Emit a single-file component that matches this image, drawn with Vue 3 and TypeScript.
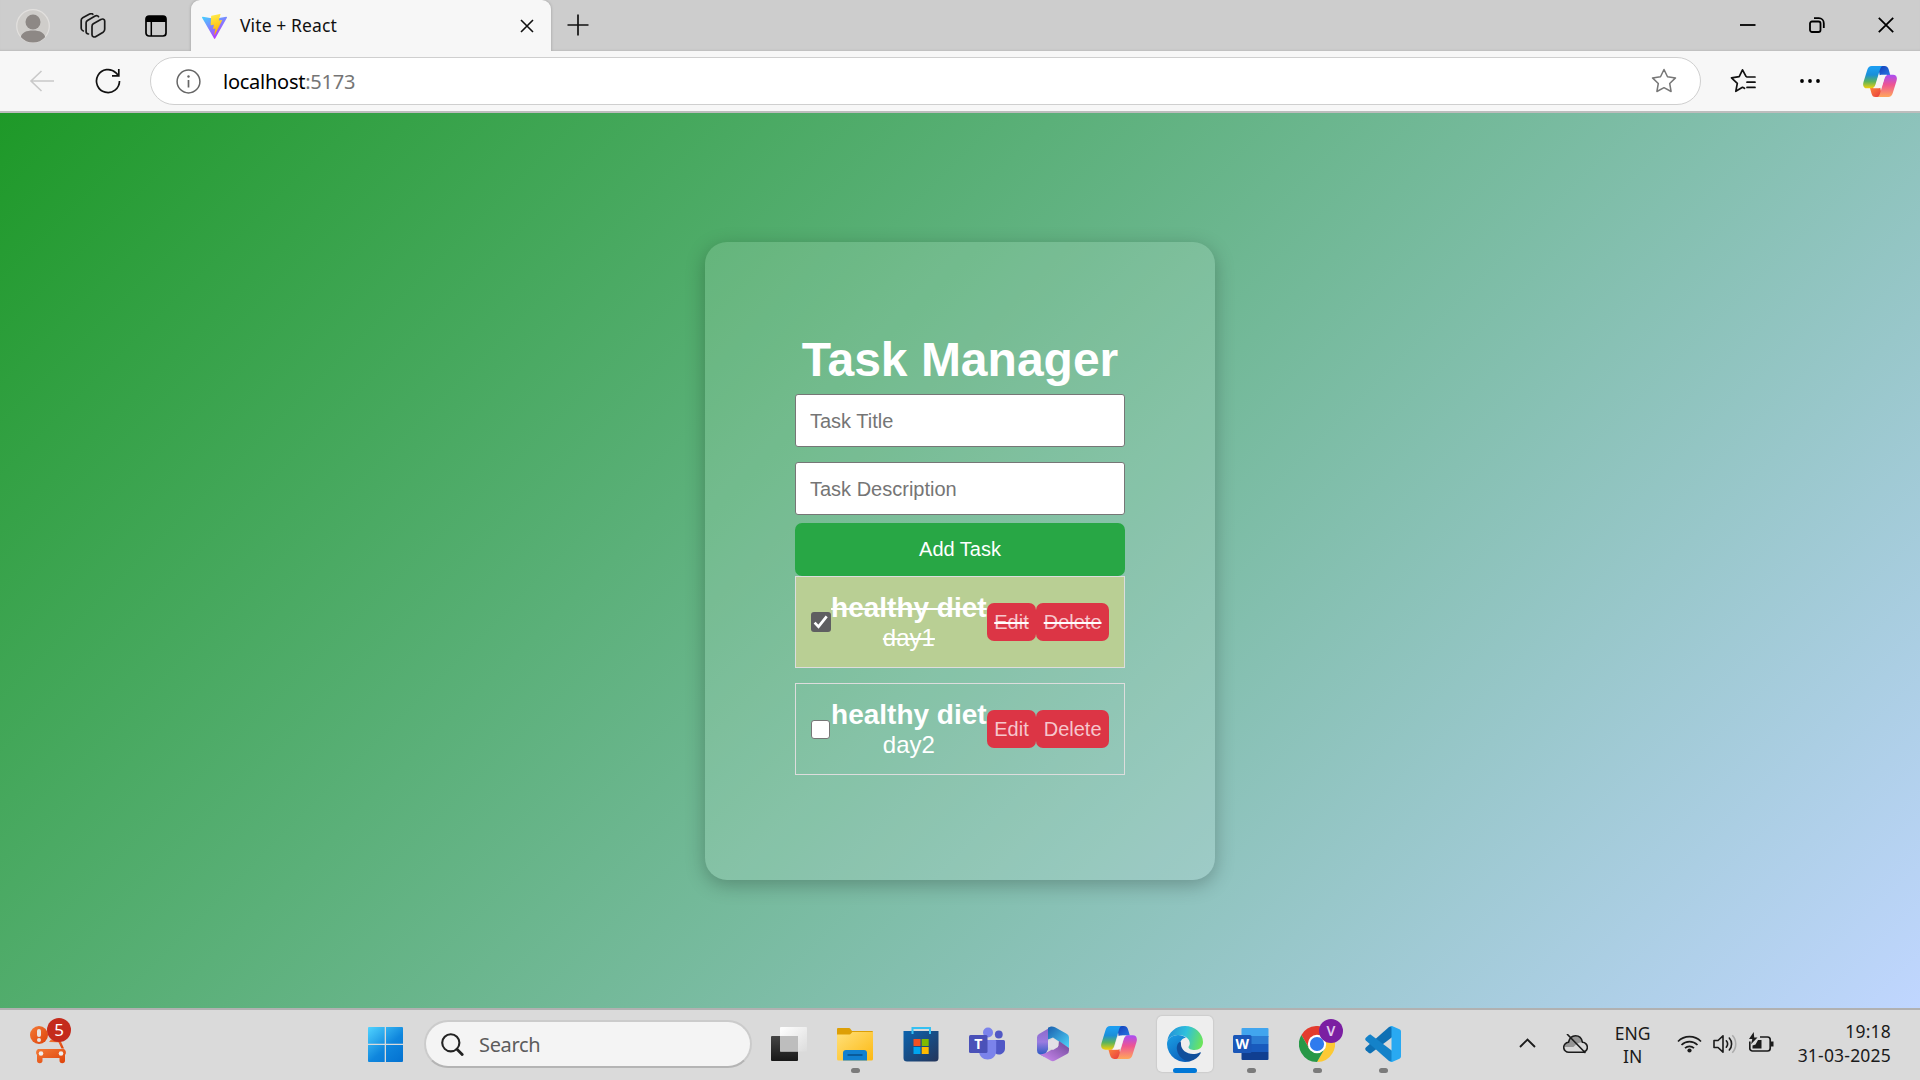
<script setup lang="ts">
import { ref } from 'vue'

interface Task {
  id: number
  title: string
  description: string
  done: boolean
}

const tasks = ref<Task[]>([
  { id: 1, title: 'healthy diet', description: 'day1', done: true },
  { id: 2, title: 'healthy diet', description: 'day2', done: false },
])
const title = ref('')
const description = ref('')

function addTask() {
  if (!title.value) return
  tasks.value.push({ id: Date.now(), title: title.value, description: description.value, done: false })
  title.value = ''
  description.value = ''
}
function removeTask(id: number) {
  tasks.value = tasks.value.filter((t) => t.id !== id)
}
</script>

<template>
  <div class="screen">
    <svg class="defs" width="0" height="0" aria-hidden="true">
      <defs>
        <linearGradient id="cpA" x1="0" y1="0" x2="0" y2="1"><stop offset="0.1" stop-color="#1c9df0" /><stop offset="0.4" stop-color="#1b8fd8" /><stop offset="0.7" stop-color="#5cb45c" /><stop offset="1" stop-color="#f5cf0a" /></linearGradient>
        <linearGradient id="cpB" x1="0" y1="0" x2="0" y2="1"><stop offset="0" stop-color="#a94df5" /><stop offset="0.45" stop-color="#ee5592" /><stop offset="1" stop-color="#ffa75b" /></linearGradient>
        <linearGradient id="cpC" x1="0" y1="0" x2="1" y2="1"><stop offset="0" stop-color="#123bb6" /><stop offset="1" stop-color="#2a7de8" /></linearGradient>
        <linearGradient id="cpD" x1="0" y1="0" x2="1" y2="1"><stop offset="0" stop-color="#ff8a3c" /><stop offset="1" stop-color="#e6383f" /></linearGradient>
        <symbol id="copilot" viewBox="0 0 34 31">
          <path d="M15 0h6.500c2.400 0 3.500 1.300 4.200 3.600L27.200 9h-4.700c-3 0-4.400.5-5.500 2z" fill="url(#cpC)" />
          <path d="M19 31h-6.500c-2.400 0-3.300-1.300-4-3.600L7 22h4.700c3 0 4.200-.5 5.300-2z" fill="url(#cpD)" />
          <path d="M8.700 0H20c-1.600 0-2.400 1.500-3.100 3.800l-4.400 14.700c-.7 2.300-1.900 3.800-4.300 3.800H4c-3.300 0-4.600-2.600-3.500-6.300L4.300 3.800C5 1.500 6.400 0 8.700 0z" fill="url(#cpA)" />
          <path d="M25.300 31H14c1.600 0 2.400-1.500 3.100-3.800l4.400-14.700c.7-2.300 1.900-3.800 4.300-3.800H30c3.300 0 4.600 2.600 3.500 6.300l-3.800 12.200C29 29.500 27.600 31 25.300 31z" fill="url(#cpB)" />
          <path d="M18.300 8.800h6c-1.600.5-2.400 1.700-3 3.500l-2.500 8c-.4 1.300-1.400 2-2.900 2H10c1.500-.5 2.300-1.800 2.900-3.500l2.400-8c.5-1.300 1.500-2 3-2z" fill="#f7f4f4" />
        </symbol>
      </defs>
    </svg>

    <header class="tabstrip">
      <div class="strip-left">
        <svg class="avatar" width="34" height="34" viewBox="0 0 34 34">
          <circle cx="17" cy="17" r="16.300" fill="#cfcdca" stroke="#e2e0de" stroke-width="1.200" />
          <circle cx="17" cy="13" r="7.500" fill="#8d8885" />
          <path d="M4.800 28c1.400-4.400 5.400-6.400 12.200-6.400S27.800 23.600 29.200 28A16 16 0 0 1 17 33.500 16 16 0 0 1 4.800 28z" fill="#8d8885" />
        </svg>
        <svg class="workspaces" width="26" height="26" viewBox="0 0 26 26" fill="none" stroke="#1a1a1a" stroke-width="1.700" stroke-linejoin="round" stroke-linecap="round">
          <path d="M13.300 10.800l7.500-4.300c2.200-1.100 3.900-.3 3.900 1.600v8.200c0 1.400-.5 2.200-1.600 2.900l-7.100 4.300c-1.900 1.100-4 .2-4-1.700v-8.300c0-1.200.3-2.100 1.300-2.700z" />
          <path d="M8.500 21c-1.800-.2-2.400-1-2.400-2.200V9.800c0-1.100.4-1.800 1.400-2.400l7.600-4.300c1.500-.8 2.900-.4 3.400.6" />
          <path d="M3.300 18C1.800 17.500 1.200 16.500 1.200 15.300V7.200c0-1.100.5-1.900 1.500-2.500l6.900-3.600c1.300-.7 2.600-.5 3.200.2" />
        </svg>
        <svg class="tabmenu" width="22" height="22" viewBox="0 0 22 22">
          <rect x="1" y="1" width="20" height="20" rx="3" fill="none" stroke="#000" stroke-width="1.700" />
          <path d="M1 7V4a3 3 0 0 1 3-3h14a3 3 0 0 1 3 3v3z" />
          <path d="M6.300 6v15" stroke="#000" stroke-width="1.500" />
        </svg>
      </div>
      <div class="tab">
        <svg class="vite" width="25" height="25" viewBox="0 0 256 257" preserveAspectRatio="none">
          <defs>
            <linearGradient id="vA" x1="0" y1="0" x2=".6" y2="1"><stop offset="0" stop-color="#41d1ff" /><stop offset="1" stop-color="#bd34fe" /></linearGradient>
            <linearGradient id="vB" x1=".4" y1="0" x2=".6" y2="1"><stop offset="0" stop-color="#ffea4a" /><stop offset=".25" stop-color="#ffdd35" /><stop offset="1" stop-color="#ffa800" /></linearGradient>
          </defs>
          <path fill="url(#vA)" d="M255.200 37.900L134.900 252.900c-2.500 4.500-8.900 4.500-11.400.1L.9 38c-2.700-4.800 1.300-10.500 6.700-9.600l120.400 21.500c.8.100 1.500.1 2.300 0l118-21.500c5.400-1 9.500 4.700 6.900 9.500z" />
          <path fill="url(#vB)" d="M185.400.1L96.400 17.500a3.300 3.300 0 0 0-2.600 3l-5.500 92.500a3.300 3.300 0 0 0 4 3.400l24.800-5.700c2.300-.5 4.400 1.500 3.900 3.900l-7.400 36c-.4 2.400 1.800 4.500 4.200 3.800l15.300-4.700c2.300-.7 4.600 1.400 4.100 3.800l-11.700 56.600c-.7 3.600 4 5.500 6 2.400l1.300-2 72.600-144.800c1.200-2.400-.9-5.200-3.500-4.700l-25.500 5c-2.400.4-4.500-1.800-3.800-4.200l16.600-57.700c.7-2.300-1.400-4.600-3.800-4z" />
        </svg>
        <span class="tab-title">Vite + React</span>
        <svg class="tab-close" width="14" height="14" viewBox="0 0 14 14"><path d="M1 1l12 12M13 1L1 13" stroke="#111" stroke-width="1.600" /></svg>
      </div>
      <svg class="newtab" width="22" height="22" viewBox="0 0 22 22"><path d="M11 .5v21M.5 11h21" stroke="#111" stroke-width="1.700" /></svg>
      <div class="winctl">
        <svg width="16" height="16" viewBox="0 0 16 16"><path d="M0 8h15.500" stroke="#000" stroke-width="1.800" /></svg>
        <svg width="16" height="16" viewBox="0 0 16 16" fill="none" stroke="#000" stroke-width="1.800"><rect x="1" y="4.500" width="10.500" height="10.500" rx="2" /><path d="M5 1.200h4.800a5 5 0 0 1 5 5V11" /></svg>
        <svg width="16" height="16" viewBox="0 0 16 16"><path d="M.8.8l14.400 14.400M15.200.8L.8 15.200" stroke="#000" stroke-width="1.800" /></svg>
      </div>
    </header>

    <div class="toolbar">
      <svg class="back" width="26" height="22" viewBox="0 0 26 22" fill="none" stroke="#c9c9c9" stroke-width="1.600"><path d="M12.500 1L2 11l10.500 10M2 11h23" /></svg>
      <svg class="reload" width="26" height="26" viewBox="0 0 26 26" fill="none" stroke="#111" stroke-width="1.700"><path d="M24.500 13A11.500 11.500 0 1 1 21 4.800l2.500 2.700M23.800 1v6.800H17" /></svg>
      <div class="address">
        <svg width="25" height="25" viewBox="0 0 25 25" fill="none" stroke="#666" stroke-width="1.500"><circle cx="12.500" cy="12.500" r="11.400" /><path d="M12.500 11v7.500" stroke-width="1.700" /><circle cx="12.500" cy="7.500" r="1.200" fill="#666" stroke="none" /></svg>
        <span class="url">localhost<i>:5173</i></span>
        <svg width="26" height="26" viewBox="0 0 26 26" fill="none" stroke="#777" stroke-width="1.500" stroke-linejoin="round"><path d="M13 1.500l3.500 7.300 8 1.100-5.800 5.600 1.400 8-7.100-3.800-7.100 3.800 1.400-8L1.500 9.900l8-1.100z" /></svg>
      </div>
      <svg class="favs" width="26" height="26" viewBox="0 0 26 26" fill="none" stroke="#111" stroke-width="1.700" stroke-linejoin="round" stroke-linecap="round"><path d="M14.500 20.300l-2-1-6.700 4 1.500-8L1.500 9.800l7.700-1.200L12.500 1.800l3.500 6.500M17 9h8M17 14.200h8M17 19.400h8" /></svg>
      <svg class="more" width="20" height="6" viewBox="0 0 20 6"><circle cx="2" cy="3" r="1.900" /><circle cx="10" cy="3" r="1.900" /><circle cx="18" cy="3" r="1.900" /></svg>
      <svg class="cp" width="34" height="31"><use href="#copilot" /></svg>
    </div>

    <main class="page">
      <section class="card">
        <h1>Task Manager</h1>
        <input v-model="title" class="field" placeholder="Task Title" />
        <input v-model="description" class="field" placeholder="Task Description" />
        <button class="add" @click="addTask">Add Task</button>
        <ul class="list">
          <li v-for="t in tasks" :key="t.id" class="item" :class="{ done: t.done }">
            <span class="check" @click="t.done = !t.done">
              <svg v-if="t.done" width="20" height="20" viewBox="0 0 20 20"><path d="M3.600 10.600l3.900 4L15.700 4.300" fill="none" stroke="#fff" stroke-width="2.700" /></svg>
            </span>
            <div class="info">
              <h3>{{ t.title }}</h3>
              <p>{{ t.description }}</p>
            </div>
            <div class="actions">
              <button>Edit</button>
              <button @click="removeTask(t.id)">Delete</button>
            </div>
          </li>
        </ul>
      </section>
    </main>

    <footer class="taskbar">
      <div class="widget">
        <svg width="42" height="46" viewBox="0 0 42 46">
          <defs><linearGradient id="car" x1="0" y1="0" x2="1" y2="1"><stop offset="0" stop-color="#f37a36" /><stop offset="1" stop-color="#de420a" /></linearGradient></defs>
          <circle cx="9" cy="17" r="9" fill="url(#car)" />
          <rect x="7" y="11" width="4" height="8" rx="2" fill="#e8e4e2" /><circle cx="9" cy="22" r="2" fill="#e8e4e2" />
          <path d="M19 24l2-2.500h9l4 9-2.500 0-3-6.300z" fill="url(#car)" />
          <path d="M8 31h26a4 4 0 0 1 1 6v5.500a2.500 2.500 0 0 1-5.500 0V40h-17v2.500a2.500 2.500 0 0 1-5.500 0V37a4 4 0 0 1 1-6z" fill="url(#car)" />
          <circle cx="11" cy="35.500" r="2.300" fill="#eee" /><circle cx="31" cy="35.500" r="2.300" fill="#eee" />
        </svg>
        <span class="badge">5</span>
      </div>

      <div class="center">
        <svg class="start" width="35" height="35" viewBox="0 0 35 35">
          <defs><linearGradient id="win" gradientUnits="userSpaceOnUse" x1="0" y1="0" x2="30" y2="35"><stop offset="0" stop-color="#50d3ff" /><stop offset=".6" stop-color="#0f86dd" /><stop offset="1" stop-color="#0574d2" /></linearGradient></defs>
          <path fill="url(#win)" d="M1 0h15.700v16.700H0V1a1 1 0 0 1 1-1zM18 0h16a1 1 0 0 1 1 1v15.700H18zM0 18h16.700v17H1a1 1 0 0 1-1-1zM18 18h17v16a1 1 0 0 1-1 1H18z" />
        </svg>
        <div class="search">
          <svg width="23" height="23" viewBox="0 0 23 23" fill="none" stroke="#222" stroke-linecap="round"><circle cx="9.800" cy="9.800" r="8.600" stroke-width="2.100" /><path d="M16 16.200l5.200 5.300" stroke-width="2.800" /></svg>
          <span>Search</span>
        </div>
        <div class="apps">
          <div class="app">
            <svg width="36" height="36" viewBox="0 0 36 36"><defs><linearGradient id="tv" x1="0" y1="0" x2="0" y2="1"><stop offset="0" stop-color="#444" /><stop offset="1" stop-color="#181818" /></linearGradient><linearGradient id="tl" x1="0" y1="0" x2="1" y2="1"><stop offset="0" stop-color="#fff" /><stop offset="1" stop-color="#dcdcdc" /></linearGradient></defs><rect x="0" y="10" width="27" height="25" rx="1" fill="url(#tv)" /><rect x="9" y="1" width="27" height="24.500" rx="1" fill="url(#tl)" /><path d="M9 10h18v15.500H9z" fill="#bdbdbd" /></svg>
          </div>
          <div class="app open">
            <svg width="36" height="36" viewBox="0 0 36 36"><defs><linearGradient id="fo" x1="0" y1="0" x2="1" y2="1"><stop offset="0" stop-color="#ffe07a" /><stop offset="1" stop-color="#fdb912" /></linearGradient></defs><path d="M0 3a1 1 0 0 1 1-1h10.500c1 0 1.500.3 2 1l1.500 2H35a1 1 0 0 1 1 1v8H0z" fill="#dd9f06" /><path d="M0 8.500h12c1 0 1.500-.3 2-1l1.300-1.500H36V33a1.500 1.500 0 0 1-1.500 1.500h-33A1.500 1.500 0 0 1 0 33z" fill="url(#fo)" /><path d="M6 34.500V27a3 3 0 0 1 3-3h18a3 3 0 0 1 3 3v7.500z" fill="#1180d0" /><path d="M10.500 29h15" stroke="#0a5796" stroke-width="1.800" /></svg>
          </div>
          <div class="app">
            <svg width="36" height="36" viewBox="0 0 36 36"><defs><linearGradient id="st" x1="0" y1="0" x2="1" y2="1"><stop offset="0" stop-color="#0b63ae" /><stop offset="1" stop-color="#25355a" /></linearGradient></defs><path d="M.5 5h35v27a3.500 3.500 0 0 1-3.500 3.500H4A3.500 3.500 0 0 1 .5 32z" fill="url(#st)" /><path d="M9.500 8V2h17.500v6" fill="none" stroke="#35c0f2" stroke-width="2" /><path d="M10.500 13h7v7h-7z" fill="#f25022" /><path d="M18.700 13h7v7h-7z" fill="#7fba00" /><path d="M10.500 21h7v7h-7z" fill="#00a4ef" /><path d="M18.700 21h7v7h-7z" fill="#ffb900" /></svg>
          </div>
          <div class="app">
            <svg width="36" height="36" viewBox="0 0 36 36"><circle cx="29.800" cy="8.500" r="3.900" fill="#5158c4" /><path d="M25 14h9.500a1.500 1.500 0 0 1 1.500 1.500v7a6 6 0 0 1-10 4.500z" fill="#5058c6" /><circle cx="19" cy="6.500" r="5" fill="#7b83eb" /><path d="M11 14h15a1.200 1.200 0 0 1 1.200 1.200V25c0 5-4 8.500-8.600 8.500S10 30 10 25z" fill="#7b83eb" /><rect x="0" y="9" width="18.500" height="18" rx="1.500" fill="#4a51b8" /><text x="9.200" y="23" text-anchor="middle" class="glyph" font-size="14">T</text></svg>
          </div>
          <div class="app">
            <svg width="36" height="36" viewBox="0 0 36 36"><defs><linearGradient id="m1" x1="0" y1="0" x2="0" y2="1"><stop offset="0" stop-color="#8a67c8" /><stop offset=".5" stop-color="#9a7be0" /><stop offset="1" stop-color="#1d56c0" /></linearGradient><linearGradient id="m2" x1="0" y1="0" x2="1" y2="1"><stop offset="0" stop-color="#1a5fae" /><stop offset="1" stop-color="#4ed5fb" /></linearGradient><linearGradient id="m3" x1="0" y1="1" x2="1" y2="0"><stop offset="0" stop-color="#d28ef5" /><stop offset="1" stop-color="#6b4595" /></linearGradient></defs><path d="M15.500 1.300L4 8a4 4 0 0 0-2 3.500v13A4 4 0 0 0 4 28l5 2.500 4-7V13z" fill="url(#m1)" /><path d="M13 1.800c2-1.500 4.500-2 7-.5L32 8a4 4 0 0 1 2 3.500V22l-10-6.500-6-4-5 2z" fill="url(#m2)" /><path d="M34 22v2.500a4 4 0 0 1-2 3.500l-12 6.500c-1.500.9-3 .9-4.500 0L4 28c3 1 6-.5 8.500-2l11-6 .5-5z" fill="url(#m3)" /><path d="M13 15.500l5-3 5 3v5.500l-5 3-5-3z" fill="#e2e0e6" /></svg>
          </div>
          <div class="app"><svg width="36" height="33"><use href="#copilot" /></svg></div>
          <div class="app open active">
            <svg width="36" height="36" viewBox="0 0 36 36"><defs><linearGradient id="e1" x1="0" y1=".3" x2="1" y2=".5"><stop offset="0" stop-color="#2390d8" /><stop offset=".5" stop-color="#2fc0dc" /><stop offset="1" stop-color="#6be45c" /></linearGradient><linearGradient id="e2" x1="0" y1="0" x2=".6" y2="1"><stop offset="0" stop-color="#1ba0e4" /><stop offset="1" stop-color="#0c62bd" /></linearGradient></defs><path d="M.3 15C1.500 6 9 0 18 0c10 0 18 7.500 18 16 0 5-3.500 8-8.500 8-3.500 0-6-1.300-6-2.700 0-1 1.300-1.500 1.300-4 0-4.500-5-8.300-11-8.300C6 9 2 11.500.3 15z" fill="url(#e1)" /><path d="M0 18c0-5.500 5-9 11-9 3 0 5.700 1 8 2.700-4 .3-6.500 4-6.500 8.300 0 7 5 13 12 14.700A18 18 0 0 1 0 18z" fill="url(#e2)" /><path d="M13.500 15.500C10 17 9.500 21 10 24c1 6 6.500 11.500 13 11.300 5-1.300 8.500-4 10.700-8 .4-.8-.3-1.200-1-.8-2.200 1.200-4.500 1.500-6.700 1.500-6.500 0-12-4.500-12-9.500 0-1.500 0-2-.5-3z" fill="#104f9c" /></svg>
          </div>
          <div class="app open">
            <svg width="36" height="36" viewBox="0 0 36 36"><path d="M9.500 2h25a1 1 0 0 1 1 1v8h-27V3a1 1 0 0 1 1-1z" fill="#41a5ee" /><path d="M8.500 10h27v8h-27z" fill="#2b7cd3" /><path d="M8.500 18h27v8h-27z" fill="#185abd" /><path d="M8.500 26h27v7a1 1 0 0 1-1 1h-25a1 1 0 0 1-1-1z" fill="#103f91" /><rect x="0" y="9" width="18.500" height="18" rx="1.500" fill="#1a57b8" /><text x="9.200" y="23" text-anchor="middle" class="glyph" font-size="14">W</text></svg>
          </div>
          <div class="app open">
            <svg width="36" height="36" viewBox="0 0 36 36"><path d="M2.400 9A18 18 0 0 1 33.600 9H18L10.200 22.500z" fill="#e33b2e" /><path d="M33.600 9A18 18 0 0 1 18 36l7.800-13.500L18 9z" fill="#fcc934" /><path d="M18 36A18 18 0 0 1 2.400 9l7.800 13.500h15.600z" fill="#279847" /><circle cx="18" cy="18" r="9.200" fill="#fff" /><circle cx="18" cy="18" r="7.100" fill="#2f7bee" /></svg>
            <span class="profile">V</span>
          </div>
          <div class="app open">
            <svg width="36" height="36" viewBox="0 0 36 36"><path d="M27 .3v11L6.200 27c-.8.600-1.600.5-2.300-.1L.8 24.200c-.8-.8-.8-1.900 0-2.700L24 1z" fill="#0e70b4" /><path d="M27 35.700v-11L6.200 9c-.8-.6-1.600-.5-2.300.1L.8 11.800c-.8.800-.8 1.900 0 2.700L24 35z" fill="#1482c9" /><path d="M27 0l7.500 3.300A2.500 2.500 0 0 1 36 5.500v25a2.500 2.500 0 0 1-1.500 2.200L27 36c-.8.300-2 .1-2.800-.7.900.6 2.300.1 2.300-1.300V2c0-1.400-1.400-1.900-2.300-1.300C25 0 26.200-.3 27 0z" fill="#29a9f2" /></svg>
          </div>
        </div>
      </div>

      <div class="tray">
        <svg class="chev" width="17" height="10" viewBox="0 0 17 10"><path d="M1 9l7.500-7.500L16 9" fill="none" stroke="#1b1b1b" stroke-width="1.900" /></svg>
        <svg class="cloud" width="25" height="20" viewBox="0 0 25 20"><path d="M6 18.300a5 5 0 0 1-.5-10C6.500 4 9 1.700 12.500 1.700S18.700 4 19.500 8.300a5 5 0 0 1-.3 10z" fill="#d8d8d8" /><path d="M1.500 13C1.500 10 3.500 8.300 5.500 8.300 6.500 4 9 1.700 12.500 1.700S18.700 4 19.500 8.300c-4-.5-7 3-9 4.700z" fill="#969696" /><path d="M6 18.300a5 5 0 0 1-.5-10C6.500 4 9 1.700 12.500 1.700S18.700 4 19.500 8.300a5 5 0 0 1-.3 10zM4 0l18.500 19" fill="none" stroke="#1b1b1b" stroke-width="1.600" /></svg>
        <div class="lang"><span>ENG</span><span>IN</span></div>
        <svg class="wifi" width="25" height="19" viewBox="0 0 25 19" fill="none" stroke="#1b1b1b" stroke-width="1.700"><path d="M1 7.500a16.200 16.200 0 0 1 23 0M4.500 11a11.300 11.300 0 0 1 16 0M8 14.200a6.400 6.400 0 0 1 9 0" /><circle cx="12.500" cy="16.500" r="2.100" fill="#1b1b1b" stroke="none" /></svg>
        <svg class="vol" width="25" height="20" viewBox="0 0 25 20" fill="none" stroke="#1b1b1b" stroke-width="1.600" stroke-linejoin="round"><path d="M1 6.500h4l5-4.700v16.400l-5-4.700H1z" /><path d="M13.300 6.800a5 5 0 0 1 0 6.400M16.300 4a9 9 0 0 1 0 12" stroke-linecap="round" /><path d="M19.300 1.200a13 13 0 0 1 0 17.600" stroke="#ababab" /></svg>
        <svg class="bat" width="25" height="21" viewBox="0 0 25 21"><path d="M11 5h7.500a2.700 2.700 0 0 1 2.700 2.700v8.600a2.700 2.700 0 0 1-2.700 2.700h-15a2.700 2.700 0 0 1-2.700-2.700V9.500" fill="none" stroke="#1b1b1b" stroke-width="1.700" /><path d="M22 9.500h2.500v5H22zM3.500 16.500v-3l3-1L9 8h3.500v8.500zM4.700 0L0 7h3.300L2 12.200 8.500 5.500H5.200z" fill="#1b1b1b" /></svg>
        <div class="clock"><span>19:18</span><span>31-03-2025</span></div>
      </div>
    </footer>
  </div>
</template>

<style>
body {
  margin: 0;
  overflow: hidden;
}
</style>

<style scoped>
* {
  box-sizing: border-box;
}
svg {
  display: block;
  flex: none;
}
.defs {
  position: absolute;
}
.screen {
  width: 1920px;
  height: 1080px;
  display: flex;
  flex-direction: column;
  overflow: hidden;
  font-family: 'Noto Sans', 'Open Sans', sans-serif;
}

/* browser tab strip */
.tabstrip {
  height: 51px;
  flex: none;
  display: flex;
  background: #cdcdcd;
  box-shadow: inset 0 -2px 2px -1px #bdbdbd;
}
.strip-left {
  width: 191px;
  display: flex;
  padding-left: 16px;
}
.avatar {
  margin-top: 9px;
}
.workspaces {
  margin: 13px 0 0 30px;
}
.tabmenu {
  margin: 15px 0 0 39px;
}
.tab {
  width: 360px;
  background: #f7f7f7;
  border-radius: 9px 9px 0 0;
  display: flex;
  padding-left: 11px;
  box-shadow: 0 0 3px rgba(0, 0, 0, 0.25);
  clip-path: inset(-3px -3px 0 -3px);
}
.vite {
  margin-top: 14px;
}
.tab-title {
  width: 280px;
  margin: 13px 0 0 13px;
  font-size: 17.500px;
  line-height: 24px;
  letter-spacing: 0.100px;
  color: #111;
}
.tab-close {
  margin-top: 19px;
}
.newtab {
  margin: 14px 0 0 16px;
}
.winctl {
  margin: 17px 26px 0 auto;
  display: flex;
  gap: 53px;
}

/* browser toolbar */
.toolbar {
  height: 62px;
  flex: none;
  display: flex;
  align-items: center;
  padding-left: 29px;
  background: #f7f7f7;
  border-bottom: 2px solid #bdbdbd;
}
.reload {
  margin-left: 40px;
}
.address {
  width: 1551px;
  height: 48px;
  margin-left: 29px;
  display: flex;
  align-items: center;
  padding: 0 23px 0 25px;
  background: #fff;
  border: 1px solid #cfcfcf;
  border-radius: 24px;
}
.url {
  flex: 1;
  margin: 1px 0 0 22px;
  font-size: 20px;
  line-height: 28px;
  letter-spacing: -0.250px;
  color: #000;
}
.url i {
  font-style: normal;
  color: #757575;
}
.favs {
  margin-left: 29px;
}
.more {
  margin-left: 44px;
}
.cp {
  margin-left: 43px;
}

/* task manager page */
.page {
  height: 895px;
  flex: none;
  display: flex;
  justify-content: center;
  align-items: flex-start;
  padding-top: 129px;
  background: linear-gradient(135deg, #1e9928, #c0d6ff);
  font-family: 'Liberation Sans', Arial, sans-serif;
}
.card {
  width: 510px;
  height: 638px;
  padding: 90px 90px 0;
  display: flex;
  flex-direction: column;
  border-radius: 22px;
  background: rgba(255, 255, 255, 0.130);
  box-shadow: 0 5px 19px rgba(0, 0, 0, 0.250);
  color: #fff;
}
h1 {
  margin: 0 0 7px;
  font-size: 48px;
  line-height: 55px;
  text-align: center;
  white-space: nowrap;
}
.field {
  height: 53px;
  flex: none;
  margin: 0 0 15px;
  padding: 1px 14px 0;
  border: 1px solid #767676;
  border-radius: 3px;
  background: #fff;
  font: 20px 'Liberation Sans', Arial, sans-serif;
  outline: none;
}
.field::placeholder {
  color: #757575;
}
.add {
  height: 53px;
  flex: none;
  margin-top: -7px;
  border: 0;
  border-radius: 7px;
  background: #28a745;
  color: #fff;
  font: 20px 'Liberation Sans', Arial, sans-serif;
}
.list {
  list-style: none;
  margin: 0;
  padding: 0;
}
.item {
  height: 92px;
  margin-bottom: 15px;
  padding: 0 15px;
  display: flex;
  align-items: center;
  border: 1px solid #ddd;
}
.check {
  width: 19px;
  height: 19px;
  margin-right: 1px;
  flex: none;
  border: 1px solid #767676;
  border-radius: 3px;
  background: #fff;
}
.info {
  flex: 1;
  text-align: center;
  white-space: nowrap;
}
h3 {
  margin: 0;
  font-size: 28px;
  line-height: 31px;
  padding-bottom: 1px;
}
p {
  margin: 0;
  font-size: 24px;
  line-height: 28px;
}
.actions {
  display: flex;
}
.actions button {
  height: 38px;
  padding: 0 7.500px;
  border: 0;
  border-radius: 7px;
  background: #dc3545;
  color: #f6c6cc;
  font: 20px 'Liberation Sans', Arial, sans-serif;
}
.done {
  background: #b9cf94;
}
.done .check {
  width: 20px;
  height: 20px;
  margin-right: 0;
  border: 0;
  background: #5f5f61;
}
.done h3,
.done p,
.done button {
  text-decoration: line-through 2px #fff;
}

/* taskbar */
.taskbar {
  height: 72px;
  flex: none;
  display: flex;
  background: #dadada;
  border-top: 2px solid #b1b1b1;
}
.widget {
  position: relative;
  width: 368px;
  padding: 8px 0 0 30px;
}
.badge {
  position: absolute;
  left: 47px;
  top: 8px;
  width: 24px;
  height: 24px;
  border-radius: 50%;
  background: #c42b1c;
  color: #fff;
  font-size: 17px;
  line-height: 24px;
  text-align: center;
}
.center {
  display: flex;
}
.start {
  margin-top: 17px;
}
.search {
  width: 328px;
  height: 48px;
  margin: 10px 4px 0 21px;
  display: flex;
  align-items: center;
  padding-left: 15px;
  border: 2px solid #cbcbcb;
  border-bottom-color: #b4b4b4;
  border-radius: 24px;
  background: #f4f4f4;
}
.search span {
  margin: 1px 0 0 15px;
  font-size: 20px;
  line-height: 28px;
  letter-spacing: -0.350px;
  color: #5c5c5c;
}
.apps {
  display: flex;
}
.app {
  position: relative;
  width: 66px;
  height: 70px;
  display: flex;
  justify-content: center;
  align-items: flex-start;
  padding-top: 16px;
}
.app.open::after {
  content: '';
  position: absolute;
  left: 28.500px;
  top: 58px;
  width: 9px;
  height: 5px;
  border-radius: 3px;
  background: #7b7b7b;
}
.app.active::after {
  left: 21px;
  width: 24px;
  background: #0078d7;
}
.app.active::before {
  content: '';
  position: absolute;
  left: 5px;
  top: 6px;
  width: 56px;
  height: 56px;
  border-radius: 5px;
  background: #eee;
  box-shadow: 0 0 2px rgba(0, 0, 0, 0.200);
}
.app svg {
  position: relative;
}
.glyph {
  fill: #fff;
  font-family: 'Open Sans', sans-serif;
  font-weight: 700;
}
.profile {
  position: absolute;
  left: 35px;
  top: 9px;
  width: 24px;
  height: 24px;
  border-radius: 50%;
  background: #7b1fa2;
  color: #e4cdee;
  font-size: 14px;
  font-weight: 600;
  line-height: 24px;
  text-align: center;
}
.tray {
  margin-left: auto;
  padding-right: 29px;
  display: flex;
  color: #1b1b1b;
  font-size: 17.500px;
}
.chev {
  margin-top: 28px;
}
.cloud {
  margin: 24px 0 0 27px;
}
.lang,
.clock {
  display: flex;
  flex-direction: column;
  line-height: 24px;
}
.lang {
  width: 50px;
  margin: 12px 0 0 20px;
  align-items: center;
  line-height: 23px;
}
.wifi {
  margin: 24px 0 0 19px;
}
.vol {
  margin: 24px 0 0 11px;
}
.bat {
  margin: 22px 0 0 11px;
}
.clock {
  margin: 9px 0 0 24px;
  align-items: flex-end;
  letter-spacing: 0.200px;
}
</style>
